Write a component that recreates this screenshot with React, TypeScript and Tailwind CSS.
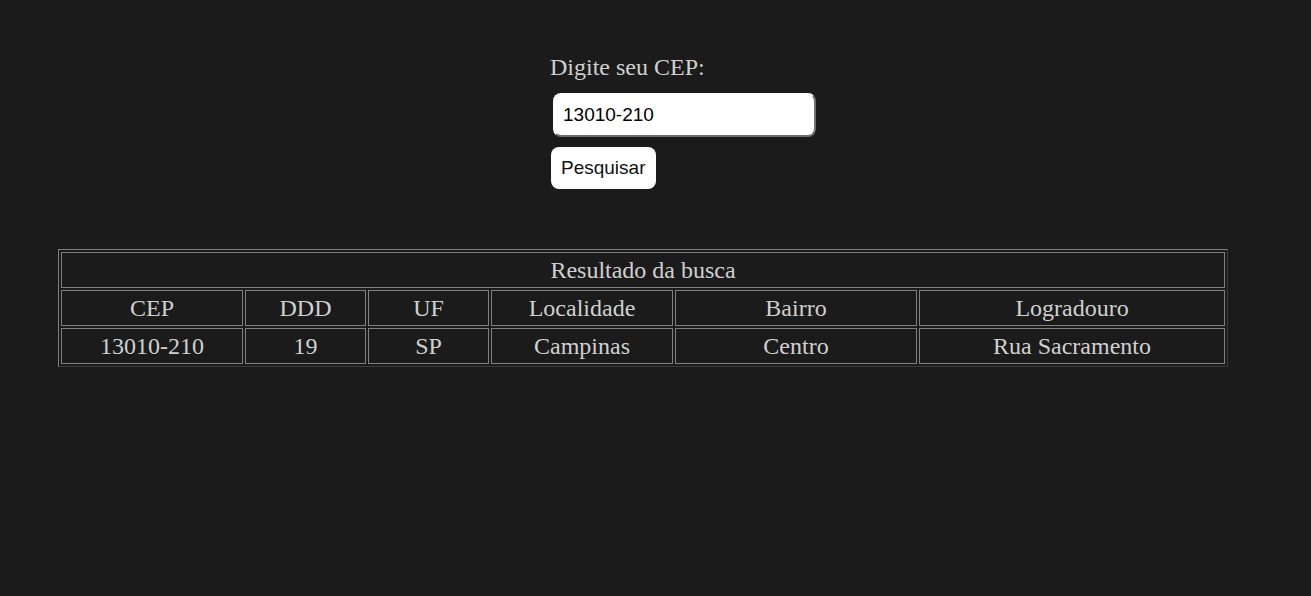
import React from "react";

const cols = [
  { h: "CEP", v: "13010-210", w: "w-[182px]" },
  { h: "DDD", v: "19", w: "w-[121px]" },
  { h: "UF", v: "SP", w: "w-[121px]" },
  { h: "Localidade", v: "Campinas", w: "w-[182px]" },
  { h: "Bairro", v: "Centro", w: "w-[242px]" },
  { h: "Logradouro", v: "Rua Sacramento", w: "w-[306px]" },
];

const cell =
  "border border-[#808080] px-[1px] py-[3px] leading-[28px] text-center font-normal";

export default function App() {
  return (
    <div
      className="min-h-[596px] w-full bg-[#1b1b1b] text-[#d0d0d0]"
      style={{ fontFamily: '"Liberation Serif", "Times New Roman", serif' }}
    >
      <div className="flex flex-col items-start pl-[550px] pt-[53px]">
        <label className="text-[24px] leading-[28px]">Digite seu CEP:</label>
        <input
          defaultValue="13010-210"
          className="ml-[3px] mt-[12px] h-[44px] w-[263px] rounded-[8px] border-2 border-t-white border-l-white border-r-[#6f6f6f] border-b-[#6f6f6f] bg-white pl-[8px] text-[19px] text-black outline-none"
          style={{ fontFamily: '"Liberation Sans", Arial, sans-serif' }}
        />
        <button
          className="ml-[1px] mt-[10px] h-[42px] w-[105px] rounded-[8px] bg-white px-[10px] text-left text-[19px] text-[#111]"
          style={{ fontFamily: '"Liberation Sans", Arial, sans-serif' }}
        >
          Pesquisar
        </button>
      </div>
      <div className="pl-[58px] pt-[60px]">
        <table className="border-separate border-spacing-[2px] border border-t-[#808080] border-l-[#808080] border-r-[#3c3c3c] border-b-[#3c3c3c] text-[24px] table-fixed w-[1170px]">
          <colgroup>
            {cols.map((c) => (
              <col key={c.h} className={c.w} />
            ))}
          </colgroup>
          <tbody>
            <tr>
              <th colSpan={6} className={cell}>
                Resultado da busca
              </th>
            </tr>
            <tr>
              {cols.map((c) => (
                <th key={c.h} className={cell}>
                  {c.h}
                </th>
              ))}
            </tr>
            <tr>
              {cols.map((c) => (
                <td key={c.h} className={cell}>
                  {c.v}
                </td>
              ))}
            </tr>
          </tbody>
        </table>
      </div>
    </div>
  );
}
